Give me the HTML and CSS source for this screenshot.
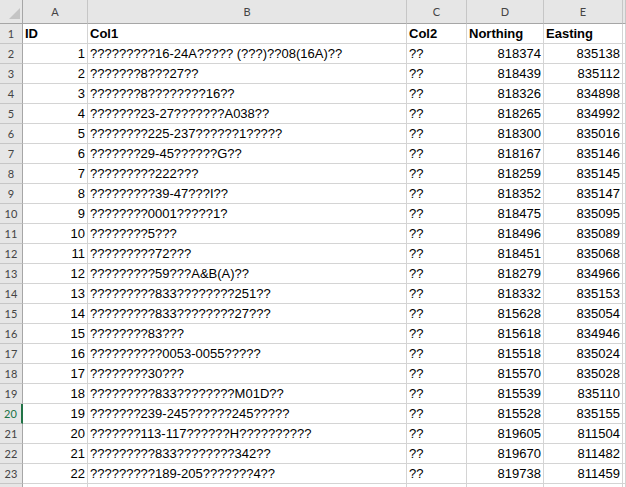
FILE: index.html
```html
<!DOCTYPE html>
<html lang="en">
<head>
    <meta charset="UTF-8">
    <title>Sheet1</title>
    <link rel="stylesheet" href="styles.css">
</head>
<body>
    <table class="sheet">
        <tr class="col-head">
            <th class="corner w-hdr">
                <svg class="select-all" width="23" height="23" viewBox="0 0 23 23"><polygon points="20,8 20,19 9,19" fill="#c4c4c4"/></svg>
            </th>
            <th class="w-a">A</th>
            <th class="w-b">B</th>
            <th class="w-c">C</th>
            <th class="w-d">D</th>
            <th class="w-e">E</th>
            <th></th>
        </tr>
        <tr><th class="row-head">1</th><td class="bold">ID</td><td class="bold">Col1</td><td class="bold">Col2</td><td class="bold">Northing</td><td class="bold">Easting</td><td></td></tr>
        <tr><th class="row-head">2</th><td class="num">1</td><td>?????????16-24A????? (???)??08(16A)??</td><td>??</td><td class="num">818374</td><td class="num">835138</td><td></td></tr>
        <tr><th class="row-head">3</th><td class="num">2</td><td>???????8???27??</td><td>??</td><td class="num">818439</td><td class="num">835112</td><td></td></tr>
        <tr><th class="row-head">4</th><td class="num">3</td><td>???????8????????16??</td><td>??</td><td class="num">818326</td><td class="num">834898</td><td></td></tr>
        <tr><th class="row-head">5</th><td class="num">4</td><td>???????23-27???????A038??</td><td>??</td><td class="num">818265</td><td class="num">834992</td><td></td></tr>
        <tr><th class="row-head">6</th><td class="num">5</td><td>????????225-237??????1?????</td><td>??</td><td class="num">818300</td><td class="num">835016</td><td></td></tr>
        <tr><th class="row-head">7</th><td class="num">6</td><td>???????29-45??????G??</td><td>??</td><td class="num">818167</td><td class="num">835146</td><td></td></tr>
        <tr><th class="row-head">8</th><td class="num">7</td><td>?????????222???</td><td>??</td><td class="num">818259</td><td class="num">835145</td><td></td></tr>
        <tr><th class="row-head">9</th><td class="num">8</td><td>?????????39-47???I??</td><td>??</td><td class="num">818352</td><td class="num">835147</td><td></td></tr>
        <tr><th class="row-head">10</th><td class="num">9</td><td>????????0001?????1?</td><td>??</td><td class="num">818475</td><td class="num">835095</td><td></td></tr>
        <tr><th class="row-head">11</th><td class="num">10</td><td>????????5???</td><td>??</td><td class="num">818496</td><td class="num">835089</td><td></td></tr>
        <tr><th class="row-head">12</th><td class="num">11</td><td>?????????72???</td><td>??</td><td class="num">818451</td><td class="num">835068</td><td></td></tr>
        <tr><th class="row-head">13</th><td class="num">12</td><td>?????????59???A&amp;B(A)??</td><td>??</td><td class="num">818279</td><td class="num">834966</td><td></td></tr>
        <tr><th class="row-head">14</th><td class="num">13</td><td>?????????833????????251??</td><td>??</td><td class="num">818332</td><td class="num">835153</td><td></td></tr>
        <tr><th class="row-head">15</th><td class="num">14</td><td>?????????833????????27???</td><td>??</td><td class="num">815628</td><td class="num">835054</td><td></td></tr>
        <tr><th class="row-head">16</th><td class="num">15</td><td>????????83???</td><td>??</td><td class="num">815618</td><td class="num">834946</td><td></td></tr>
        <tr><th class="row-head">17</th><td class="num">16</td><td>??????????0053-0055?????</td><td>??</td><td class="num">815518</td><td class="num">835024</td><td></td></tr>
        <tr><th class="row-head">18</th><td class="num">17</td><td>????????30???</td><td>??</td><td class="num">815570</td><td class="num">835028</td><td></td></tr>
        <tr><th class="row-head">19</th><td class="num">18</td><td>?????????833????????M01D??</td><td>??</td><td class="num">815539</td><td class="num">835110</td><td></td></tr>
        <tr><th class="row-head selected">20</th><td class="num">19</td><td>???????239-245??????245?????</td><td>??</td><td class="num">815528</td><td class="num">835155</td><td></td></tr>
        <tr><th class="row-head">21</th><td class="num">20</td><td>???????113-117??????H??????????</td><td>??</td><td class="num">819605</td><td class="num">811504</td><td></td></tr>
        <tr><th class="row-head">22</th><td class="num">21</td><td>?????????833????????342??</td><td>??</td><td class="num">819670</td><td class="num">811482</td><td></td></tr>
        <tr><th class="row-head">23</th><td class="num">22</td><td>?????????189-205???????4??</td><td>??</td><td class="num">819738</td><td class="num">811459</td><td></td></tr>
        <tr><th class="row-head"></th><td></td><td></td><td></td><td></td><td></td><td></td></tr>
    </table>
</body>
</html>
```

FILE: styles.css
```css
body {
    margin: 0;
    background-color: #fff;
    font-family: "Liberation Sans", Arial, sans-serif;
    overflow: hidden;
}

.sheet {
    border-collapse: separate;
    border-spacing: 0;
    table-layout: fixed;
    width: 100%;
}

.sheet th,
.sheet td {
    box-sizing: border-box;
    height: 20px;
    padding: 0 2px;
    line-height: 19px;
    font-size: 13px;
    font-weight: normal;
    color: #000;
    text-align: left;
    white-space: nowrap;
    overflow: hidden;
    border-right: 1px solid #d4d4d4;
    border-bottom: 1px solid #d4d4d4;
}

/* column letters */
.col-head th {
    height: 24px;
    line-height: 23px;
    background-color: #e6e6e6;
    color: #444;
    font-family: Lato, "Liberation Sans", sans-serif;
    font-size: 11px;
    text-align: center;
    border-right-color: #c6c6c6;
    border-bottom-color: #a6a6a6;
}

.w-hdr { width: 23px; }
.w-a { width: 65px; }
.w-b { width: 319px; }
.w-c { width: 60px; }
.w-d { width: 77px; }
.w-e { width: 79px; }

.corner {
    padding: 0 !important;
    border-right-color: #a6a6a6 !important;
}

.select-all {
    display: block;
}

/* row numbers */
.sheet .row-head {
    background-color: #e6e6e6;
    color: #444;
    font-family: Lato, "Liberation Sans", sans-serif;
    font-size: 11px;
    text-align: center;
    border-right-color: #a6a6a6;
    border-bottom-color: #c6c6c6;
}

.sheet .row-head.selected {
    color: #217346;
    border-right: 2px solid #217346;
}

.num {
    text-align: right !important;
}

.bold {
    font-weight: bold !important;
}
```
